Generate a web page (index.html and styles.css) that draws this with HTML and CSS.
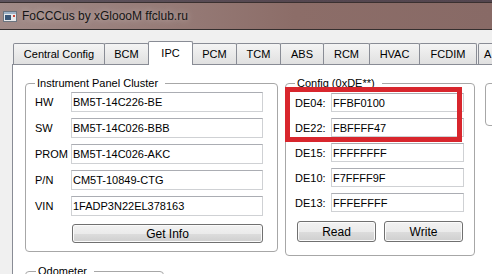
FILE: index.html
```html
<!DOCTYPE html>
<html lang="en">
<head>
    <meta charset="UTF-8">
    <title>FoCCCus by xGloooM ffclub.ru</title>
    <link rel="stylesheet" href="styles.css">
</head>
<body>
    <div class="titlebar">
        <svg class="app-icon" width="14" height="11" viewBox="0 0 14 11">
            <rect x="0.5" y="0.5" width="13" height="10" fill="#e8eaec" stroke="#6c7580"/>
            <rect x="1" y="1" width="12" height="2" fill="#9fb3c8"/>
            <rect x="2" y="4" width="6" height="5" fill="#3b5878"/>
            <rect x="10" y="4" width="2" height="2" fill="#c8463a"/>
        </svg>
        <span class="title">FoCCCus by xGloooM ffclub.ru</span>
    </div>

    <div class="client">
        <!-- вкладки -->
        <div class="tabs">
            <div class="tab tab-cc">Central Config</div>
            <div class="tab tab-bcm">BCM</div>
            <div class="tab tab-ipc active">IPC</div>
            <div class="tab tab-pcm">PCM</div>
            <div class="tab tab-tcm">TCM</div>
            <div class="tab tab-abs">ABS</div>
            <div class="tab tab-rcm">RCM</div>
            <div class="tab tab-hvac">HVAC</div>
            <div class="tab tab-fcdim">FCDIM</div>
            <div class="tab tab-more">A</div>
        </div>

        <div class="pane">
            <div class="col-left">
                <fieldset class="group ipc">
                    <legend>Instrument Panel Cluster</legend>
                    <div class="rows">
                        <div class="row"><label>HW</label><input type="text" value="BM5T-14C226-BE" readonly></div>
                        <div class="row"><label>SW</label><input type="text" value="BM5T-14C026-BBB" readonly></div>
                        <div class="row"><label>PROM</label><input type="text" value="BM5T-14C026-AKC" readonly></div>
                        <div class="row"><label>P/N</label><input type="text" value="CM5T-10849-CTG" readonly></div>
                        <div class="row"><label>VIN</label><input type="text" value="1FADP3N22EL378163" readonly></div>
                    </div>
                    <button class="btn btn-info">Get Info</button>
                </fieldset>

                <fieldset class="group odometer">
                    <legend>Odometer</legend>
                </fieldset>
            </div>

            <fieldset class="group config">
                <legend>Config (0xDE**)</legend>
                <div class="rows">
                    <div class="hl">
                        <div class="row"><label>DE04:</label><input type="text" value="FFBF0100"></div>
                        <div class="row"><label>DE22:</label><input type="text" value="FBFFFF47"></div>
                    </div>
                    <div class="row"><label>DE15:</label><input type="text" value="FFFFFFFF"></div>
                    <div class="row"><label>DE10:</label><input type="text" value="F7FFFF9F"></div>
                    <div class="row"><label>DE13:</label><input type="text" value="FFFEFFFF"></div>
                </div>
                <div class="btn-row">
                    <button class="btn">Read</button>
                    <button class="btn">Write</button>
                </div>
            </fieldset>

            <fieldset class="group extra"></fieldset>
        </div>
    </div>
</body>
</html>
```

FILE: styles.css
```css
* {
    box-sizing: border-box;
    margin: 0;
    padding: 0;
}

body {
    width: 492px;
    height: 274px;
    overflow: hidden;
    background-color: #f0f0f0;
    color: #000;
    font-family: "Liberation Sans", Arial, sans-serif;
    font-size: 11px;
}

/* заголовок окна */
.titlebar {
    height: 30px;
    display: flex;
    align-items: center;
    gap: 5px;
    padding: 3px 0 0 3px;
    background:
        linear-gradient(to bottom, rgba(40, 40, 60, 0.55) 0, rgba(40, 40, 60, 0.55) 2px, #3a3030 2px, #3a3030 3px, transparent 3px),
        linear-gradient(to right, #a08a87 0%, #967b77 35%, #8c6d68 60%, #886a66 100%);
    border-bottom: 1px solid #352f2f;
}

.app-icon {
    flex: none;
}

.title {
    font-size: 12px;
    color: #151515;
    text-shadow: 0 0 6px rgba(255, 255, 255, 0.5);
}

.client {
    padding: 11px 0 0 12px;
}

/* вкладки */
.tabs {
    display: flex;
    align-items: flex-end;
    margin-left: 1px;
    height: 23px;
}

.tab {
    flex: none;
    height: 21px;
    margin-right: -1px;
    border: 1px solid #898c95;
    border-bottom: none;
    border-radius: 2px 2px 0 0;
    background: linear-gradient(#f4f4f4, #e0e0e0);
    display: flex;
    align-items: center;
    justify-content: center;
    white-space: nowrap;
    overflow: hidden;
}

.tab.active {
    position: relative;
    z-index: 1;
    height: 24px;
    margin-bottom: -1px;
    padding-bottom: 2px;
    background: #fff;
}

.tab-cc { width: 92px; }
.tab-bcm { width: 45px; }
.tab-ipc { width: 45px; }
.tab-pcm { width: 45px; }
.tab-tcm { width: 45px; }
.tab-abs { width: 44px; }
.tab-rcm { width: 47px; }
.tab-hvac { width: 51px; }
.tab-fcdim { width: 58px; }
.tab-more { width: 40px; margin-left: 2px; justify-content: flex-start; padding-left: 5px; }

.pane {
    width: 520px;
    height: 220px;
    border: 1px solid #898c95;
    background-color: #fff;
    padding: 11px 0 0 12px;
    display: flex;
    align-items: flex-start;
}

/* группы */
.group {
    flex: none;
    border: 1px solid #a7a7a7;
    border-radius: 4px;
    min-width: 0;
}

.group legend {
    padding: 0 7px 0 2px;
    line-height: 14px;
}

.col-left {
    flex: none;
    display: flex;
    flex-direction: column;
    gap: 12px;
}

.ipc {
    width: 253px;
    padding: 2px 14px 8px 9px;
}

.odometer {
    width: 139px;
    height: 40px;
    padding-left: 10px;
}

.config {
    width: 190px;
    margin-left: 7px;
    padding: 3px 10px 13px 9px;
}

.extra {
    width: 100px;
    height: 43px;
    margin-top: 7px;
    margin-left: 10px;
}

.rows {
    display: flex;
    flex-direction: column;
    gap: 6px;
}

.hl {
    position: relative;
    display: flex;
    flex-direction: column;
    gap: 6px;
}

/* красная рамка поверх полей */
.hl::after {
    content: '';
    position: absolute;
    left: -10px;
    right: 2px;
    top: -6px;
    bottom: -5px;
    border: 5px solid #d8262d;
}

.row {
    display: flex;
    align-items: center;
}

.row label {
    width: 36px;
    flex: none;
}

.row input {
    width: 192px;
    height: 20px;
    padding: 0 1px;
    border: 1px solid #cfd1d4;
    border-top-color: #abadb3;
    font-family: inherit;
    font-size: 11px;
    color: #000;
    background-color: #fff;
    outline: none;
}

.config .row input {
    width: 133px;
    height: 19px;
}

.btn {
    height: 19px;
    border: 1px solid #707070;
    border-radius: 3px;
    background: linear-gradient(#f2f2f2 0%, #ebebeb 50%, #dddddd 50%, #cfcfcf 100%);
    box-shadow: inset 0 0 0 1px #fbfbfb;
    font-family: inherit;
    font-size: 12px;
    color: #000;
}

.btn-info {
    display: block;
    width: 191px;
    margin: 8px 0 0 37px;
}

.btn-row {
    display: flex;
    gap: 8px;
    margin: 9px 0 0 2px;
}

.btn-row .btn {
    width: 79px;
    height: 21px;
}
```
